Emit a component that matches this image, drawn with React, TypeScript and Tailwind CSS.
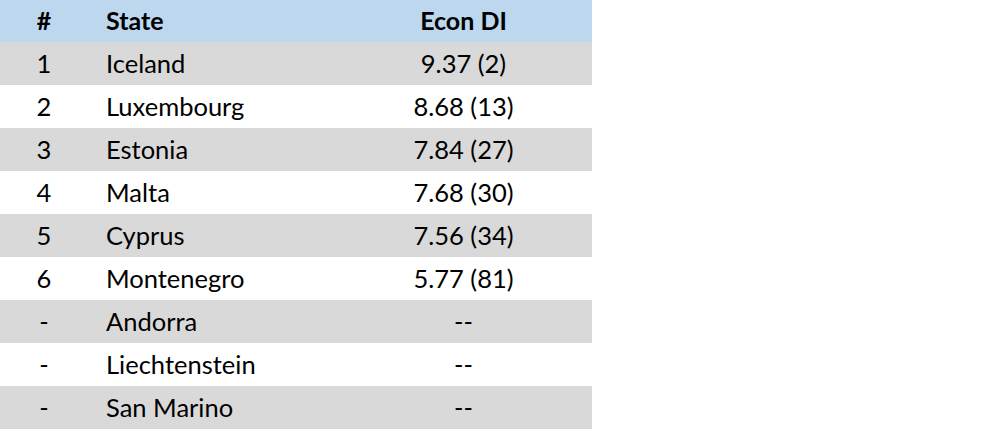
import React from "react";

const rows: [string, string, string][] = [
  ["1", "Iceland", "9.37 (2)"],
  ["2", "Luxembourg", "8.68 (13)"],
  ["3", "Estonia", "7.84 (27)"],
  ["4", "Malta", "7.68 (30)"],
  ["5", "Cyprus", "7.56 (34)"],
  ["6", "Montenegro", "5.77 (81)"],
  ["-", "Andorra", "--"],
  ["-", "Liechtenstein", "--"],
  ["-", "San Marino", "--"],
];

export default function App() {
  return (
    <div className="w-[999px] h-[429px] bg-white text-black" style={{ fontFamily: "Lato, 'Open Sans', sans-serif" }}>
      <div className="w-[592px]">
        <div className="flex h-[42px] items-center bg-[#bdd7ee] text-[25px] font-bold">
          <div className="w-[88px] text-center">#</div>
          <div className="w-[247px] pl-[18px]">State</div>
          <div className="flex-1 text-center">Econ DI</div>
        </div>
        {rows.map((r, i) => (
          <div
            key={i}
            className={`flex h-[43px] items-center text-[25.5px] ${i % 2 === 0 ? "bg-[#d9d9d9]" : "bg-white"}`}
          >
            <div className="w-[88px] text-center">{r[0]}</div>
            <div className="w-[247px] pl-[18px]">{r[1]}</div>
            <div className="flex-1 text-center">{r[2]}</div>
          </div>
        ))}
      </div>
    </div>
  );
}
